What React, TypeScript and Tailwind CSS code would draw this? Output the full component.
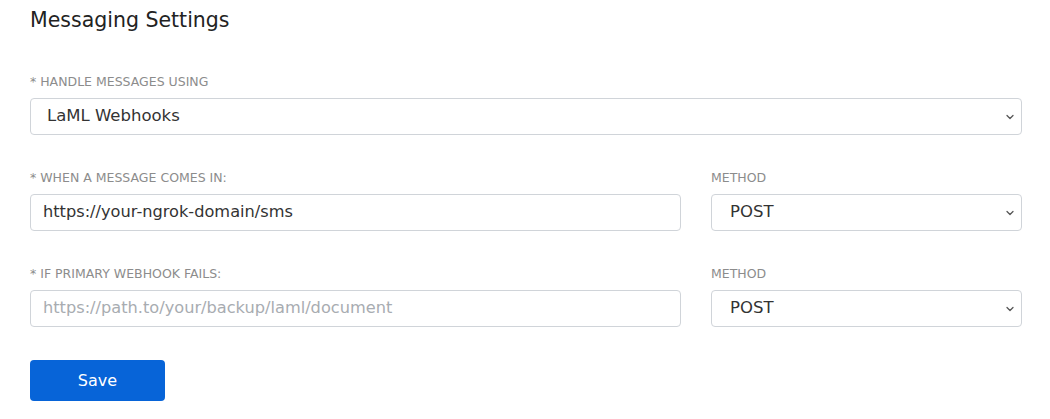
import { ChevronDown } from "lucide-react";

const font = { fontFamily: '"DejaVu Sans", "Noto Sans", sans-serif' };

function Label({ children }: { children: React.ReactNode }) {
  return (
    <div className="mb-[9px] text-[12.5px] leading-[14px] uppercase text-[#8c8c8c]">
      {children}
    </div>
  );
}

function Select({ value, className = "" }: { value: string; className?: string }) {
  return (
    <div
      className={`flex items-center justify-between h-[37px] pl-[16px] pr-[5px] border border-[#d0d4d9] rounded-[4px] bg-white text-[16.5px] text-[#333] ${className}`}
    >
      <span>{value}</span>
      <ChevronDown size={12} strokeWidth={2.5} className="text-[#555]" />
    </div>
  );
}

function Input({ value, placeholder }: { value?: string; placeholder?: string }) {
  return (
    <div className="flex items-center h-[37px] px-[12px] border border-[#d0d4d9] rounded-[4px] bg-white text-[16.2px]">
      {value ? (
        <span className="text-[#333]">{value}</span>
      ) : (
        <span className="text-[#a8acb1]">{placeholder}</span>
      )}
    </div>
  );
}

export default function App() {
  return (
    <div className="w-[1050px] h-[419px] bg-white pl-[30px] pr-[28px] pt-[7px]" style={font}>
      <h2 className="text-[20.5px] leading-[26px] text-[#222] mb-[42px]">Messaging Settings</h2>

      <Label>* Handle messages using</Label>
      <Select value="LaML Webhooks" />

      <div className="flex gap-[30px] mt-[36px]">
        <div className="flex-1">
          <Label>* When a message comes in:</Label>
          <Input value="https://your-ngrok-domain/sms" />
        </div>
        <div className="w-[311px]">
          <Label>Method</Label>
          <Select value="POST" className="pl-[18px]" />
        </div>
      </div>

      <div className="flex gap-[30px] mt-[36px]">
        <div className="flex-1">
          <Label>* If primary webhook fails:</Label>
          <Input placeholder="https://path.to/your/backup/laml/document" />
        </div>
        <div className="w-[311px]">
          <Label>Method</Label>
          <Select value="POST" className="pl-[18px]" />
        </div>
      </div>

      <button className="mt-[33px] w-[135px] h-[41px] rounded-[4px] bg-[#0764d8] text-white text-[16px]">
        Save
      </button>
    </div>
  );
}
